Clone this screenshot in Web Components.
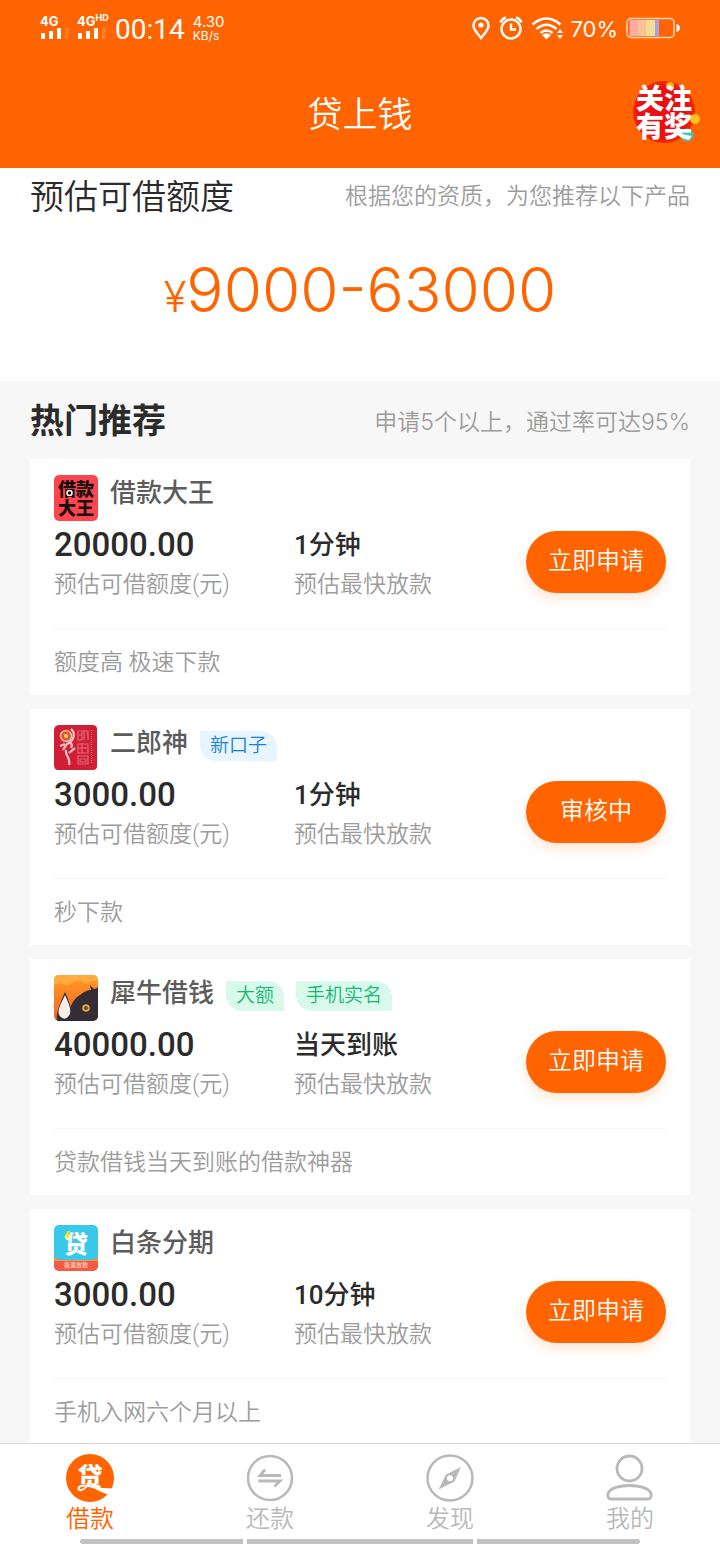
<!DOCTYPE html>
<html lang="zh-CN">
<head>
<meta charset="utf-8">
<meta name="viewport" content="width=device-width, initial-scale=1">
<title>贷上钱</title>
<style>
  :root {
    --orange: #ff6400;
    --ink: #2b2b2b;
    --mid: #5c5c5c;
    --muted: #9c9c9c;
    --idle: #b9b9b9;
    --page: #f7f7f7;
  }
  body {
    margin: 0;
    background: var(--page);
    color: var(--ink);
    font-family: Roboto, "Noto Sans CJK SC", sans-serif;
    font-weight: 350;
  }
</style>
</head>
<body>
<loan-app>
  <status-bar slot="top"></status-bar>
  <app-header slot="top" heading="贷上钱"></app-header>
  <credit-summary heading="预估可借额度" note="根据您的资质，为您推荐以下产品" amount="9000-63000"></credit-summary>
  <section-heading heading="热门推荐" note="申请5个以上，通过率可达95%"></section-heading>
  <loan-list>
    <loan-card name="借款大王" amount="20000.00" speed="1分钟" action="立即申请" note="额度高 极速下款">
      <logo-king slot="logo"></logo-king>
    </loan-card>
    <loan-card name="二郎神" amount="3000.00" speed="1分钟" action="审核中" note="秒下款">
      <logo-erlang slot="logo"></logo-erlang>
      <loan-tag slot="tags" tone="blue">新口子</loan-tag>
    </loan-card>
    <loan-card name="犀牛借钱" amount="40000.00" speed="当天到账" action="立即申请" note="贷款借钱当天到账的借款神器">
      <logo-rhino slot="logo"></logo-rhino>
      <loan-tag slot="tags">大额</loan-tag>
      <loan-tag slot="tags">手机实名</loan-tag>
    </loan-card>
    <loan-card name="白条分期" amount="3000.00" speed="10分钟" action="立即申请" note="手机入网六个月以上">
      <logo-baitiao slot="logo"></logo-baitiao>
    </loan-card>
  </loan-list>
  <tab-bar slot="bottom">
    <tab-item label="借款" active>
      <svg width="48" height="48" viewBox="0 0 48 48" aria-hidden="true">
        <circle cx="24" cy="24" r="24" fill="#ff6400"/>
        <text x="24" y="32" text-anchor="middle" font-family="Noto Sans CJK SC, sans-serif" font-size="25" font-weight="900" fill="#fff">贷</text>
        <path d="M11 30H22V40H11Z" fill="#ff6400"/>
        <path d="M24 28C20 35 14 38 12.500 35C12 31 19 31 25 32.500C32 35 38 36 45.500 35.500" fill="none" stroke="#fff" stroke-width="2"/>
        <path d="M26 31C34 34 40 35 46.500 34.500Q45 38 42 40.500C36 39 31 36 26 33Z" fill="#fff"/>
      </svg>
    </tab-item>
    <tab-item label="还款">
      <svg width="48" height="48" viewBox="0 0 48 48" fill="none" stroke="#b9b9b9" stroke-width="2.500" aria-hidden="true">
        <circle cx="24" cy="24" r="22"/>
        <path d="M19 15.500L14 21.500H35M12.500 27H34L28.500 32.500" stroke-width="2.800"/>
      </svg>
    </tab-item>
    <tab-item label="发现">
      <svg width="48" height="48" viewBox="0 0 48 48" aria-hidden="true">
        <circle cx="24" cy="24" r="22.500" fill="none" stroke="#b9b9b9" stroke-width="2.500"/>
        <path fill-rule="evenodd" fill="#b9b9b9" d="M35 13L28.500 27.500L12.500 35.500L20 20.500ZM24 21.200a3 3 0 1 0 0 6a3 3 0 1 0 0-6Z"/>
      </svg>
    </tab-item>
    <tab-item label="我的">
      <svg width="48" height="48" viewBox="0 0 48 48" fill="none" stroke="#b9b9b9" stroke-width="2.800" aria-hidden="true">
        <circle cx="23.500" cy="14.500" r="12.500"/>
        <path d="M5 45C2 45 1.500 42 2 39.500C4 34 14 31.500 23.500 31.500S43 34 45 39.500C45.500 42 45 45 42 45Z"/>
      </svg>
    </tab-item>
  </tab-bar>
</loan-app>

<script>
class BaseElement extends HTMLElement {
  connectedCallback() {
    if (this.shadowRoot) return;
    this.attachShadow({ mode: 'open' }).innerHTML = this.render();
  }
  attr(name) { return this.getAttribute(name) || ''; }
}

customElements.define('loan-app', class extends BaseElement {
  render() {
    return `<style>
      :host { display: flex; flex-direction: column; height: 100vh; }
      header, footer { flex: none; }
      main { flex: 1; min-height: 0; overflow-y: auto; scrollbar-width: none; }
    </style>
    <header><slot name="top"></slot></header>
    <main><slot></slot></main>
    <footer><slot name="bottom"></slot></footer>`;
  }
});

customElements.define('status-bar', class extends BaseElement {
  render() {
    const signal = `<svg width="30" height="12" viewBox="0 0 30 12" fill="#fff" aria-hidden="true">
      <rect x="1" y="5" width="4" height="6"/><rect x="9" y="3" width="4" height="8"/>
      <rect x="17" y="0" width="4" height="11"/><rect x="25" y="-1" width="4" height="12" opacity=".15"/></svg>`;
    return `<style>
      :host { display: flex; justify-content: space-between; height: 56px; padding: 0 38px 0 40px; background: var(--orange); color: #fff; }
      .side { display: flex; align-items: center; }
      .net { display: flex; flex-direction: column; width: 37px; height: 28px; font: 700 13px/14px Inter, sans-serif; white-space: nowrap; }
      .net svg { display: block; }
      .net sup { font-size: 9px; line-height: 8px; vertical-align: top; }
      .time { font-size: 28px; line-height: 32px; font-weight: 400; margin-top: 4px; margin-left: 1px; }
      .rate { font: 400 15px/15px Inter, sans-serif; margin-left: 8px; }
      .rate small { display: block; font-size: 12px; line-height: 13px; }
      .pct { font: 400 22px/28px Inter, sans-serif; margin: 2px 8px 0 5px; }
      .icons { display: flex; gap: 8px; }
    </style>
    <div class="side">
      <span class="net"><span>4G</span>${signal}</span>
      <span class="net"><span>4G<sup>HD</sup></span>${signal}</span>
      <span class="time">00:14</span>
      <span class="rate">4.30<small>KB/s</small></span>
    </div>
    <div class="side">
      <span class="icons">
        <svg width="20" height="24" viewBox="0 0 20 24" aria-hidden="true"><path d="M10 2a7.500 7.500 0 0 0-7.500 7.500C2.500 14 7 18 10 22C13 18 17.500 14 17.500 9.500A7.500 7.500 0 0 0 10 2Z" fill="none" stroke="#fff" stroke-width="2.500"/><circle cx="10" cy="9" r="2.600" fill="#fff"/></svg>
        <svg width="24" height="24" viewBox="0 0 24 24" fill="none" stroke="#fff" stroke-width="2.400" aria-hidden="true"><circle cx="12" cy="13" r="9.500"/><path d="M12 7.500v6h5M1.500 6.500Q3 2.500 7 1.500M22.500 6.500Q21 2.500 17 1.500"/></svg>
        <svg width="34" height="24" viewBox="0 0 34 24" fill="none" stroke="#fff" stroke-width="2.600" aria-hidden="true"><path d="M1.500 8.500Q15.500-3.500 29.500 8.500M5.500 13Q15.500 4.500 25.500 13M9.500 17Q15.500 12 21.500 17"/><path d="M11 19Q15.500 15.500 20 19L15.500 23.500Z" fill="#fff" stroke="none"/><path d="M29 13l3 4h-6zM29 23l3-4h-6z" fill="#fff" stroke="none"/></svg>
      </span>
      <span class="pct">70%</span>
      <svg width="56" height="22" viewBox="0 0 56 22" aria-hidden="true">
        <rect x="3.500" y="3" width="9" height="16" fill="#fdaaa0"/><rect x="12" y="3" width="9" height="16" fill="#fbc095"/>
        <rect x="20" y="3" width="9" height="16" fill="#f6dc92"/><rect x="29" y="3" width="4" height="16" fill="#a3a3ee"/>
        <rect x="1" y="1.500" width="47" height="19" rx="4" fill="none" stroke="#ffd9bd" stroke-width="1.500"/>
        <path d="M50.500 7Q54 8 54 11T50.500 15Z" fill="#fff"/></svg>
    </div>`;
  }
});

customElements.define('app-header', class extends BaseElement {
  render() {
    return `<style>
      :host { display: grid; grid-template-columns: 1fr auto 1fr; align-items: center; height: 112px; padding: 0 20px; background: var(--orange); color: #fff; }
      h1 { grid-column: 2; margin: 0; padding-top: 8px; font-size: 35px; line-height: 44px; font-weight: 350; }
      a { justify-self: end; position: relative; box-sizing: border-box; width: 70px; height: 66px; padding: 4px 6px;
        font: 900 28px/28px "Noto Sans CJK SC", sans-serif; color: #fff; text-decoration: none; }
      span { position: relative; display: block; width: 58px; word-break: break-all; }
      svg { position: absolute; inset: 0; }
    </style>
    <h1>${this.attr('heading')}</h1>
    <a href="#follow">
      <svg width="70" height="66" viewBox="0 0 70 66" aria-hidden="true">
        <defs><radialGradient id="glow"><stop offset=".8" stop-color="#e90f14"/><stop offset="1" stop-color="#f4280c"/></radialGradient></defs>
        <circle cx="34" cy="33" r="31" fill="url(#glow)"/>
        <circle cx="65" cy="40" r="5" fill="#ffc21a"/><circle cx="57" cy="56" r="6.500" fill="#3cc6c0"/>
        <circle cx="40" cy="7" r="4" fill="#ffb400"/>
      </svg>
      <span>关注有奖</span>
    </a>`;
  }
});

customElements.define('credit-summary', class extends BaseElement {
  render() {
    return `<style>
      :host { display: block; background: #fff; height: 213px; }
      .row { display: flex; justify-content: space-between; align-items: center; height: 56px; padding: 0 30px; }
      h2 { margin: 0; padding-top: 2px; font-size: 34px; line-height: 44px; font-weight: 350; }
      p { margin: 0; font-family: Inter, "Noto Sans CJK SC", sans-serif; font-size: 23px; line-height: 32px; color: var(--muted); }
      .amount { margin-top: 26px; text-align: center; font: 350 62px/80px Inter, sans-serif; color: var(--orange); }
      .amount small { font-size: 42px; }
    </style>
    <div class="row"><h2>${this.attr('heading')}</h2><p>${this.attr('note')}</p></div>
    <div class="amount"><small>¥</small>${this.attr('amount')}</div>`;
  }
});

customElements.define('section-heading', class extends BaseElement {
  render() {
    return `<style>
      :host { display: flex; justify-content: space-between; align-items: center; height: 78px; padding: 0 30px; }
      h2 { margin: 0; padding-top: 2px; font-size: 34px; line-height: 44px; font-weight: 700; }
      p { margin: 0; padding-top: 4px; font-family: Inter, "Noto Sans CJK SC", sans-serif; font-size: 23px; line-height: 32px; color: var(--muted); }
    </style>
    <h2>${this.attr('heading')}</h2><p>${this.attr('note')}</p>`;
  }
});

customElements.define('loan-list', class extends BaseElement {
  render() {
    return `<style>:host { display: flex; flex-direction: column; gap: 14px; padding: 0 30px 14px; }</style><slot></slot>`;
  }
});

customElements.define('loan-tag', class extends BaseElement {
  render() {
    const blue = this.attr('tone') === 'blue';
    return `<style>
      :host { display: block; padding: 0 10px; border-radius: 0 16px 0 16px; font-size: 19px; line-height: 30px;
        background: ${blue ? '#e6f5ff' : '#d9f9ea'}; color: ${blue ? '#1a80dc' : '#12b877'}; }
    </style><slot></slot>`;
  }
});

customElements.define('loan-card', class extends BaseElement {
  render() {
    return `<style>
      :host { display: block; background: #fff; padding: 16px 24px 0; }
      .head { display: flex; align-items: flex-start; height: 46px; }
      h3 { margin: 0 12px; font-size: 26px; line-height: 36px; font-weight: 500; color: var(--mid); }
      .tags { display: flex; gap: 12px; margin-top: 6px; }
      .body { display: grid; grid-template-columns: 240fr 232fr 140px; align-items: start; height: 107px; }
      dl { margin: 4px 0 0; display: flex; flex-direction: column-reverse; }
      dt { font-size: 23px; line-height: 40px; color: var(--muted); }
      dd { margin: 0; font-size: 26px; line-height: 40px; font-weight: 500; }
      .sum dd { font-size: 33px; }
      button { margin: 10px 0 0; width: 140px; height: 62px; padding: 0 0 2px; border: 0; border-radius: 31px; background: var(--orange);
        color: #fff; font: inherit; font-size: 24px; line-height: 32px; box-shadow: 0 6px 12px rgba(255, 100, 0, .16); }
      .note { margin: 0; border-top: 1px solid #f6f6f6; padding: 18px 0 16px; font-size: 23px; line-height: 32px; color: var(--muted); }
    </style>
    <div class="head"><slot name="logo"></slot><h3>${this.attr('name')}</h3><div class="tags"><slot name="tags"></slot></div></div>
    <div class="body">
      <dl class="sum"><dt>预估可借额度(元)</dt><dd>${this.attr('amount')}</dd></dl>
      <dl><dt>预估最快放款</dt><dd>${this.attr('speed')}</dd></dl>
      <button type="button">${this.attr('action')}</button>
    </div>
    <p class="note">${this.attr('note')}</p>`;
  }
});

const logoStyle = `<style>:host { display: block; flex: none; width: 44px; height: 46px; border-radius: 5px; overflow: hidden; } svg { display: block; }</style>`;

customElements.define('logo-king', class extends BaseElement {
  render() {
    return `${logoStyle}<style>
      :host { position: relative; box-sizing: border-box; padding: 4px; background: #fb4650; color: #1b0d0e; }
      span { display: block; font: 900 18px/19px "Noto Sans CJK SC", sans-serif; word-break: break-all; }
      svg { position: absolute; inset: 0; }
    </style><span>借款大王</span>
    <svg width="44" height="46" viewBox="0 0 44 46" aria-hidden="true"><circle cx="15.500" cy="18" r="2.500" fill="#1b0d0e" stroke="#fff" stroke-width="1.500"/></svg>`;
  }
});

customElements.define('logo-erlang', class extends BaseElement {
  render() {
    return `${logoStyle}<svg width="44" height="46" viewBox="0 0 44 46" aria-hidden="true">
      <rect width="43" height="45" rx="4" fill="#d01e35"/>
      <circle cx="12" cy="11" r="5.500" fill="#dc5a2c" stroke="#f3b8a8" stroke-width="1.500"/><circle cx="12" cy="11" r="2" fill="#f6d060"/>
      <path d="M17 4C22 8 20 16 13 19L9 25M11 19L6 21M13 19C17 16 19 20 17 23M12 25C11 32 17 32 15 40M15 28L21 23" fill="none" stroke="#f4c4c8" stroke-width="2.200"/>
      <g fill="none" stroke="#e06674" stroke-width="1.200"><path d="M24 6h4v9h-4zM24 10h4M30 5v10M30 6h4v9M32 9h2M24 19h10v9H24zM24 23h10M28 18v10M24 31h10v8H24zM26 34h6v3h-6z"/><path d="M37.500 5v34" stroke-dasharray="1 1"/></g></svg>`;
  }
});

customElements.define('logo-rhino', class extends BaseElement {
  render() {
    return `${logoStyle}<svg width="44" height="46" viewBox="0 0 44 46" aria-hidden="true">
      <defs><linearGradient id="sky" x1="0" y1="0" x2="0" y2="1"><stop offset="0" stop-color="#ff9c26"/><stop offset="1" stop-color="#f8602a"/></linearGradient></defs>
      <rect width="44" height="46" fill="url(#sky)"/>
      <path d="M0 0H44V6Q38 4 32 9Q26 3 19 7Q14 12 8 9Q3 7 0 10Z" fill="#ffab3d"/>
      <path d="M11 46C16 40 15 26 26 20Q32 15 37 15L36 10L40 14Q42 14 44 12V46Z" fill="#342d35"/>
      <path d="M3 46Q1 38 11 17Q20 36 17 46Z" fill="#342d35"/>
      <path d="M11 20C15 29 17 33 16 39Q11 48 5 40C3 34 8 27 11 20Z" fill="#f6eee6"/>
      <circle cx="32" cy="33" r="3.800" fill="#dda63e"/><circle cx="32" cy="33" r="1.800" fill="#5b3920"/></svg>`;
  }
});

customElements.define('logo-baitiao', class extends BaseElement {
  render() {
    return `${logoStyle}<svg width="44" height="46" viewBox="0 0 44 46">
      <rect width="44" height="46" fill="#37c8ea"/>
      <path d="M0 33L6 35H38L44 33V46H0Z" fill="#f35b45"/><path d="M0 33L6 35H38L44 33V36H0Z" fill="#f59a3c"/>
      <text x="22" y="28" text-anchor="middle" font-family="Noto Sans CJK SC, sans-serif" font-size="24" font-weight="900" fill="#fff">贷</text>
      <path d="M14 6L10 12h3l-1 4l5-7h-3l2-3z" fill="#f7ee1c"/>
      <text x="22" y="42" text-anchor="middle" font-family="Noto Sans CJK SC, sans-serif" font-size="6" font-weight="500" fill="#ffd8cd">极速放款</text></svg>`;
  }
});

customElements.define('tab-bar', class extends BaseElement {
  render() {
    return `<style>
      :host { display: block; background: #fff; border-top: 1px solid #d6d6d6; }
      nav { display: grid; grid-template-columns: repeat(4, 1fr); padding: 10px 0 3px; }
      .gesture { display: grid; grid-template-columns: 163fr 226fr 163fr; gap: 4px; padding: 0 80px; }
      i { height: 5px; background: #c2c2c2; }
      i:first-child { border-radius: 3px 0 0 3px; }
      i:last-child { border-radius: 0 3px 3px 0; }
    </style>
    <nav><slot></slot></nav>
    <div class="gesture"><i></i><i></i><i></i></div>`;
  }
});

customElements.define('tab-item', class extends BaseElement {
  render() {
    return `<style>
      :host { display: block; }
      a { display: flex; flex-direction: column; align-items: center; color: ${this.hasAttribute('active') ? 'var(--orange)' : 'var(--idle)'}; text-decoration: none; font-size: 24px; line-height: 34px; }
      ::slotted(svg) { display: block; }
    </style>
    <a href="#tab"><slot></slot><span>${this.attr('label')}</span></a>`;
  }
});
</script>
</body>
</html>
